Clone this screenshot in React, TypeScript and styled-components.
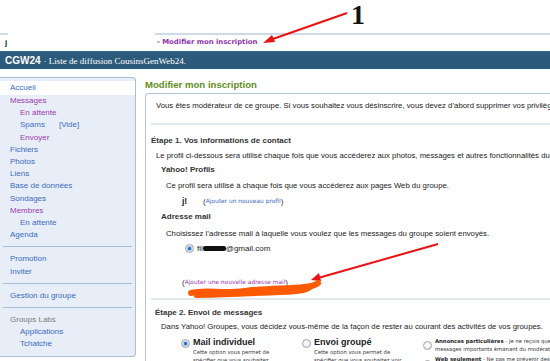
import React from "react";
import styled, { createGlobalStyle } from "styled-components";

const Global = createGlobalStyle`
  html, body { margin: 0; padding: 0; background: #fff; }
  body { width: 550px; height: 361px; overflow: hidden; font-family: "Liberation Sans", Arial, sans-serif; }
  #root { position: relative; width: 550px; height: 361px; overflow: hidden; }
`;

const Page = styled.div`
  position: relative;
  width: 550px;
  height: 361px;
  overflow: hidden;
`;

const TopArea = styled.div`
  padding-top: 33px;
  height: 18px;
`;

const RuleRow = styled.div`
  display: flex;
  height: 2px;
`;

const RuleSeg = styled.div<{ $w?: number }>`
  background: #cddbe7;
  height: 2px;
  ${p => (p.$w ? `width: ${p.$w}px;` : "flex: 1;")}
`;

const Gap = styled.div<{ $w: number }>`
  width: ${p => p.$w}px;
`;

const NavRow = styled.div`
  display: flex;
  align-items: center;
  height: 14px;
  font-size: 8px;
`;

const UserInitial = styled.span`
  width: 152px;
  padding-left: 5px;
  font-family: "Liberation Sans", Arial, sans-serif;
  font-weight: bold;
  color: #222;
`;

const TopLink = styled.span`
  font-family: "DejaVu Sans", Verdana, sans-serif;
  font-size: 6.9px;
  font-weight: bold;
  color: #8d33ad;
`;

const HeaderBar = styled.div`
  height: 17px;
  background: #2b5a7b;
  border-top: 1px solid #3f6b8a;
  display: flex;
  align-items: center;
  padding-left: 5px;
  color: #fff;
  white-space: nowrap;
`;

const GroupCode = styled.span`
  font-family: "Liberation Sans", Arial, sans-serif;
  font-weight: bold;
  font-size: 10px;
`;

const GroupName = styled.span`
  font-family: "Liberation Serif", "Times New Roman", serif;
  font-size: 9px;
  margin-left: 3px;
`;

const Body = styled.div`
  display: flex;
  align-items: flex-start;
  margin-top: 8px;
`;

const Sidebar = styled.nav`
  flex: none;
  width: 136px;
  box-sizing: border-box;
  background: #e8eef7;
  border: 1px solid #a9bed4;
  border-left: none;
  border-radius: 0 4px 4px 0;
  padding: 3px 0 5px;
  font-size: 8px;
`;

const NavGroup = styled.div``;

const NavItem = styled.div<{ $indent?: boolean; $tone: "link" | "visited" | "muted"; $active?: boolean }>`
  line-height: ${p => (p.$active ? "14px" : "12.2px")};
  padding-left: ${p => (p.$indent ? 20 : 10)}px;
  background: ${p => (p.$active ? "#fff" : "transparent")};
  color: ${p => (p.$tone === "link" ? "#3a6bc4" : p.$tone === "visited" ? "#9a3ab0" : "#7a7a7a")};
  white-space: nowrap;
`;

const Extra = styled.span`
  margin-left: 14px;
`;

const Divider = styled.div`
  height: 1px;
  background: #a9bed4;
  margin: 5px 3px 6px 3px;
`;

const Main = styled.main`
  flex: none;
  margin-left: 9px;
  width: 460px;
`;

const PageTitle = styled.h1`
  margin: 0;
  font-size: 9.6px;
  line-height: 16px;
  font-weight: bold;
  color: #5f8f1c;
  white-space: nowrap;
`;

const ContentBox = styled.div`
  width: 620px;
  box-sizing: border-box;
  border: 1px solid #b3c6d9;
  border-right: none;
  border-bottom: none;
  border-radius: 4px 0 0 0;
  padding: 6px 0 0 5px;
  height: 300px;
`;

const Para = styled.p<{ $indent?: number; $mt?: number }>`
  margin: ${p => p.$mt ?? 0}px 0 0 ${p => p.$indent ?? 0}px;
  font-size: 7.75px;
  line-height: 12px;
  color: #222;
  white-space: nowrap;
`;

const StepTitle = styled.h2<{ $indent?: number; $mt?: number }>`
  margin: ${p => p.$mt ?? 0}px 0 0 ${p => p.$indent ?? 0}px;
  font-size: 8px;
  line-height: 12px;
  font-weight: bold;
  color: #333;
  white-space: nowrap;
`;

const SubTitle = styled.h3<{ $indent?: number; $mt?: number }>`
  margin: ${p => p.$mt ?? 0}px 0 0 ${p => p.$indent ?? 0}px;
  font-size: 8px;
  line-height: 12px;
  font-weight: bold;
  color: #333;
  white-space: nowrap;
`;

const Separator = styled.div<{ $mt: number }>`
  height: 2px;
  background: #e2e8ef;
  margin-top: ${p => p.$mt}px;
`;

const ProfileRow = styled.div<{ $mt?: number }>`
  display: flex;
  align-items: center;
  margin: ${p => p.$mt ?? 0}px 0 0 31px;
  height: 12px;
`;

const ProfileName = styled.span`
  font-size: 8.5px;
  font-weight: bold;
  color: #222;
  width: 21px;
`;

const SmallLink = styled.span<{ $visited?: boolean }>`
  font-family: "DejaVu Sans", Verdana, sans-serif;
  font-size: 5.9px;
  color: ${p => (p.$visited ? "#9a3ab0" : "#3a6bc4")};
  white-space: nowrap;
`;

const Paren = styled.span`
  color: #333;
  font-family: "Liberation Sans", Arial, sans-serif;
  font-size: 8px;
`;

const EmailRow = styled.div<{ $mt?: number }>`
  display: flex;
  align-items: center;
  gap: 3px;
  margin: ${p => p.$mt ?? 0}px 0 0 34px;
  height: 12px;
  font-size: 8px;
  color: #222;
`;

const Radio = styled.span<{ $checked?: boolean }>`
  display: block;
  flex: none;
  width: 7px;
  height: 7px;
  border-radius: 50%;
  border: 1px solid #9aa3ad;
  background: radial-gradient(circle at 50% 40%, #ffffff 0%, #e3e6ea 100%);
  position: relative;
  &::after {
    content: "";
    display: ${p => (p.$checked ? "block" : "none")};
    position: absolute;
    left: 2px;
    top: 2px;
    width: 3px;
    height: 3px;
    border-radius: 50%;
    background: #2a64b8;
    box-shadow: 0 0 1px 1px #8fb4e6;
  }
`;

const Redacted = styled.span`
  display: inline-block;
  width: 23px;
  height: 5px;
  background: #111;
  border-radius: 2px;
  margin: 0 -3px 0 -3px;
`;

const LinkLine = styled.div<{ $mt?: number }>`
  margin: ${p => p.$mt ?? 0}px 0 0 31px;
  height: 12px;
  display: flex;
  align-items: center;
`;

const Options = styled.div`
  display: grid;
  grid-template-columns: 121px 121px 180px;
  margin: 4px 0 0 30px;
`;

const Option = styled.div`
  display: flex;
  gap: 3px;
  align-items: flex-start;
`;

const OptionStack = styled.div`
  display: flex;
  flex-direction: column;
  gap: 2px;
`;

const RadioSlot = styled.div<{ $mt: number }>`
  padding-top: ${p => p.$mt}px;
`;

const OptionTitle = styled.div`
  font-size: 9px;
  font-weight: bold;
  line-height: 11px;
  color: #222;
  white-space: nowrap;
`;

const OptionNote = styled.div`
  font-family: "DejaVu Sans", Verdana, sans-serif;
  font-size: 5.3px;
  line-height: 8px;
  color: #333;
  white-space: nowrap;
`;

const NoteStrong = styled.b`
  font-weight: bold;
  color: #222;
`;

const Overlay = styled.svg`
  position: absolute;
  left: 0;
  top: 0;
  width: 550px;
  height: 361px;
  pointer-events: none;
`;

const Marker = styled.div`
  position: absolute;
  left: 351px;
  top: 1px;
  font-family: "Liberation Serif", "Times New Roman", serif;
  font-weight: bold;
  font-size: 28px;
  line-height: 28px;
  color: #111;
`;

type Tone = "link" | "visited" | "muted";
const groups: { label: string; tone: Tone; indent?: boolean; active?: boolean; extra?: string }[][] = [
  [
    { label: "Accueil", tone: "link", active: true },
    { label: "Messages", tone: "visited" },
    { label: "En attente", tone: "visited", indent: true },
    { label: "Spams", tone: "link", indent: true, extra: "[Vide]" },
    { label: "Envoyer", tone: "visited", indent: true },
    { label: "Fichiers", tone: "link" },
    { label: "Photos", tone: "link" },
    { label: "Liens", tone: "link" },
    { label: "Base de données", tone: "link" },
    { label: "Sondages", tone: "link" },
    { label: "Membres", tone: "visited" },
    { label: "En attente", tone: "link", indent: true },
    { label: "Agenda", tone: "link" },
  ],
  [
    { label: "Promotion", tone: "link" },
    { label: "Inviter", tone: "link" },
  ],
  [{ label: "Gestion du groupe", tone: "link" }],
  [
    { label: "Groups Labs", tone: "muted" },
    { label: "Applications", tone: "link", indent: true },
    { label: "Tchatche", tone: "link", indent: true },
  ],
];

export default function App() {
  return (
    <Page>
      <Global />
      <TopArea>
        <RuleRow>
          <RuleSeg $w={8} />
          <Gap $w={147} />
          <RuleSeg />
        </RuleRow>
        <NavRow>
          <UserInitial>j</UserInitial>
          <TopLink>- Modifier mon inscription</TopLink>
        </NavRow>
      </TopArea>
      <HeaderBar>
        <GroupCode>CGW24</GroupCode>
        <GroupName>· Liste de diffusion CousinsGenWeb24.</GroupName>
      </HeaderBar>
      <Body>
        <Sidebar>
          {groups.map((g, gi) => (
            <React.Fragment key={gi}>
              {gi > 0 && <Divider />}
              <NavGroup>
                {g.map((it, i) => (
                  <NavItem key={i} $tone={it.tone} $indent={it.indent} $active={it.active}>
                    {it.label}
                    {it.extra && <Extra>{it.extra}</Extra>}
                  </NavItem>
                ))}
              </NavGroup>
            </React.Fragment>
          ))}
        </Sidebar>
        <Main>
          <PageTitle>Modifier mon inscription</PageTitle>
          <ContentBox>
            <Para $indent={5}>
              Vous êtes modérateur de ce groupe. Si vous souhaitez vous désinscrire, vous devez d’abord supprimer vos privilèges de modérateur.
            </Para>
            <Separator $mt={11} />
            <StepTitle $mt={10}>Étape 1. Vos informations de contact</StepTitle>
            <Para $indent={5} $mt={3}>
              Le profil ci-dessous sera utilisé chaque fois que vous accéderez aux photos, messages et autres fonctionnalités du groupe.
            </Para>
            <SubTitle $indent={10} $mt={2}>Yahoo! Profils</SubTitle>
            <Para $indent={15} $mt={4}>
              Ce profil sera utilisé à chaque fois que vous accéderez aux pages Web du groupe.
            </Para>
            <ProfileRow $mt={3}>
              <ProfileName>j!</ProfileName>
              <Paren>(</Paren>
              <SmallLink>Ajouter un nouveau profil</SmallLink>
              <Paren>)</Paren>
            </ProfileRow>
            <SubTitle $indent={10} $mt={4}>Adresse mail</SubTitle>
            <Para $indent={15} $mt={5}>
              Choisissez l’adresse mail à laquelle vous voulez que les messages du groupe soient envoyés.
            </Para>
            <EmailRow $mt={2}>
              <Radio $checked />
              <span>fil</span>
              <Redacted />
              <span>@gmail.com</span>
            </EmailRow>
            <LinkLine $mt={22}>
              <Paren>(</Paren>
              <SmallLink $visited>Ajouter une nouvelle adresse mail</SmallLink>
              <Paren>)</Paren>
            </LinkLine>
            <Separator $mt={10} />
            <StepTitle $indent={4} $mt={7}>Étape 2. Envoi de messages</StepTitle>
            <Para $indent={10} $mt={2}>
              Dans Yahoo! Groupes, vous décidez vous-même de la façon de rester au courant des activités de vos groupes.
            </Para>
            <Options>
              <Option>
                <RadioSlot $mt={2}>
                  <Radio $checked />
                </RadioSlot>
                <div>
                  <OptionTitle>Mail individuel</OptionTitle>
                  <OptionNote>Cette option vous permet de</OptionNote>
                  <OptionNote>spécifier que vous souhaitez</OptionNote>
                </div>
              </Option>
              <Option>
                <RadioSlot $mt={2}>
                  <Radio />
                </RadioSlot>
                <div>
                  <OptionTitle>Envoi groupé</OptionTitle>
                  <OptionNote>Cette option vous permet de</OptionNote>
                  <OptionNote>spécifier que vous souhaitez voir</OptionNote>
                </div>
              </Option>
              <OptionStack>
                <Option>
                  <RadioSlot $mt={4}>
                    <Radio />
                  </RadioSlot>
                  <div>
                    <OptionNote>
                      <NoteStrong>Annonces particulières</NoteStrong> - Je ne reçois que les
                    </OptionNote>
                    <OptionNote>messages importants émanant du modérateur.</OptionNote>
                  </div>
                </Option>
                <Option>
                  <RadioSlot $mt={5}>
                    <Radio />
                  </RadioSlot>
                  <OptionNote>
                    <NoteStrong>Web seulement</NoteStrong> - Ne pas me prévenir des
                  </OptionNote>
                </Option>
              </OptionStack>
            </Options>
          </ContentBox>
        </Main>
      </Body>
      <Marker>1</Marker>
      <Overlay viewBox="0 0 550 361">
        <line x1="347" y1="13" x2="270" y2="40" stroke="#ee1111" strokeWidth="2" />
        <polygon points="263,43 272,35 275,42" fill="#ee1111" />
        <line x1="438" y1="244" x2="318" y2="278" stroke="#ee1111" strokeWidth="2" />
        <polygon points="311,280 319,273 321,281" fill="#ee1111" />
        <path
          d="M191 293 C 205 289, 222 294, 245 291 S 290 289, 304 287 S 316 284, 318 283"
          stroke="#ff5a00"
          strokeWidth="6"
          fill="none"
          strokeLinecap="round"
        />
        <path
          d="M196 296 C 220 296, 250 294, 280 293 S 305 290, 314 286"
          stroke="#ff5a00"
          strokeWidth="4"
          fill="none"
          strokeLinecap="round"
        />
      </Overlay>
    </Page>
  );
}
